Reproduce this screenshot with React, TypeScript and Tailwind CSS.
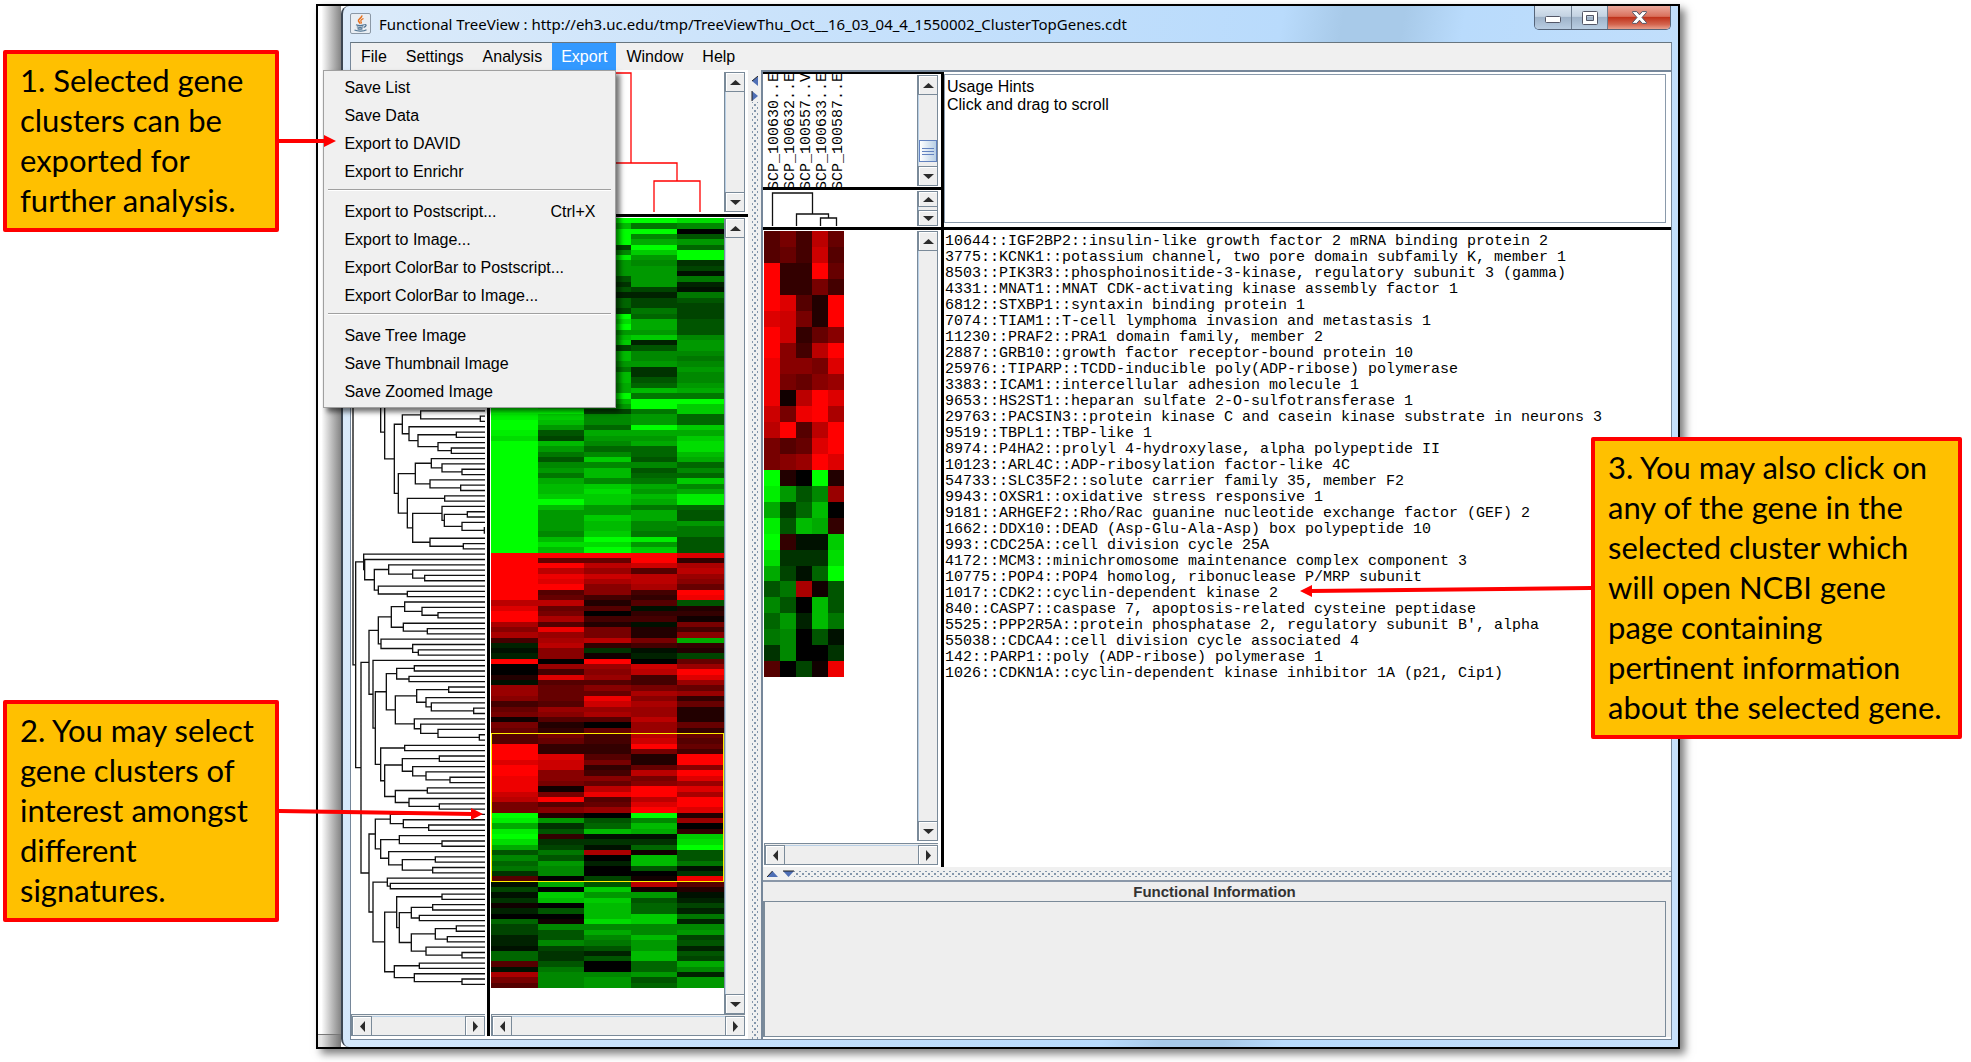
import React from "react";

type TreeNode = number | [number, TreeNode, TreeNode];
type Direction = "up" | "down" | "left" | "right";

const TITLE =
  "Functional TreeView : http://eh3.uc.edu/tmp/TreeViewThu_Oct__16_03_04_4_1550002_ClusterTopGenes.cdt";

const MENUS = ["File", "Settings", "Analysis", "Export", "Window", "Help"];

const EXPORT_GROUPS = [
  [
    { label: "Save List" },
    { label: "Save Data" },
    { label: "Export to DAVID" },
    { label: "Export to Enrichr" },
  ],
  [
    { label: "Export to Postscript...", shortcut: "Ctrl+X" },
    { label: "Export to Image..." },
    { label: "Export ColorBar to Postscript..." },
    { label: "Export ColorBar to Image..." },
  ],
  [
    { label: "Save Tree Image" },
    { label: "Save Thumbnail Image" },
    { label: "Save Zoomed Image" },
  ],
];

const ARRAYS = [
  "SCP_100630..E",
  "SCP_100632..E",
  "SCP_100557..V",
  "SCP_100633..E",
  "SCP_100587..E",
];

const GENES = [
  "10644::IGF2BP2::insulin-like growth factor 2 mRNA binding protein 2",
  "3775::KCNK1::potassium channel, two pore domain subfamily K, member 1",
  "8503::PIK3R3::phosphoinositide-3-kinase, regulatory subunit 3 (gamma)",
  "4331::MNAT1::MNAT CDK-activating kinase assembly factor 1",
  "6812::STXBP1::syntaxin binding protein 1",
  "7074::TIAM1::T-cell lymphoma invasion and metastasis 1",
  "11230::PRAF2::PRA1 domain family, member 2",
  "2887::GRB10::growth factor receptor-bound protein 10",
  "25976::TIPARP::TCDD-inducible poly(ADP-ribose) polymerase",
  "3383::ICAM1::intercellular adhesion molecule 1",
  "9653::HS2ST1::heparan sulfate 2-O-sulfotransferase 1",
  "29763::PACSIN3::protein kinase C and casein kinase substrate in neurons 3",
  "9519::TBPL1::TBP-like 1",
  "8974::P4HA2::prolyl 4-hydroxylase, alpha polypeptide II",
  "10123::ARL4C::ADP-ribosylation factor-like 4C",
  "54733::SLC35F2::solute carrier family 35, member F2",
  "9943::OXSR1::oxidative stress responsive 1",
  "9181::ARHGEF2::Rho/Rac guanine nucleotide exchange factor (GEF) 2",
  "1662::DDX10::DEAD (Asp-Glu-Ala-Asp) box polypeptide 10",
  "993::CDC25A::cell division cycle 25A",
  "4172::MCM3::minichromosome maintenance complex component 3",
  "10775::POP4::POP4 homolog, ribonuclease P/MRP subunit",
  "1017::CDK2::cyclin-dependent kinase 2",
  "840::CASP7::caspase 7, apoptosis-related cysteine peptidase",
  "5525::PPP2R5A::protein phosphatase 2, regulatory subunit B', alpha",
  "55038::CDCA4::cell division cycle associated 4",
  "142::PARP1::poly (ADP-ribose) polymerase 1",
  "1026::CDKN1A::cyclin-dependent kinase inhibitor 1A (p21, Cip1)",
];

// One letter per array: A-P is green level 0-15, a-p is red level 0-15
const ROWS_BEFORE = (
  "PPPPN PPLHI PPPPA PPPIF PPPKJ PPEPG PPIMP PPOJP PPJID PPJJE PPJJB PPFJH PPDJC PPFEB PPCCH " +
  "PPGEF PPGEE PPEHE PPPGE PPNKF PPPKF PPJJF PPLMI PPMCJ PPEFJ PPLII PPLIH PPJJI PPHDJ PPLDI " +
  "PPLFI PPKGJ PPKLK PPPHH PPLPP PNJPM PPEHM OMIJG PLIJG PJGPM OFKKK NEJJM PLIKN PJGGN PHIGL " +
  "PFMFK PIIIG PJLFI PHLGG PKIHM PLMKI PLNJK PMMLO PPMKO PLJHG PJJKF PJMKF PJLIJ PJLIH PIMHH " +
  "PLPOF PNNJF PLPMF " +
  "ppppn pggpd pplmk pljfl pomlj pnkli ppikg pfiep pgedo llcfF ngfBc phadd pkeeb kfcBh iohce " +
  "kjhci eklhK Clded BiDBc CibCE papag ajjmj aeilp cnjen Bffej jgihg jggkj igoid efmkg gjjjc " +
  "hikjc bfflc hcajg gdgjd"
).split(" ");

const SELECTED_ROWS = (
  "fhelg fgemf pddpg pddhe pnfcp nmhcp pmdgi pielp oiihn ohgij oblpn mhopk lpflp hfgnp hijpn " +
  "PcAPc OJFIj KDGLA OFLKd PdBBM NDDDN KEBGP FHkbF IFALF GJCLH HIAFB DIAAD faEbo"
).split(" ");

const ROWS_AFTER = (
  "BKFlf EAMbc BMJJB DLMFC bALGE CFLGC AALMH GbNMC EIIII EFKIJ CFILE CIHJF BEFJC GDCLF GDFLE " +
  "fFAGK BHAGI kIIJC hIJFJ fIJGJ"
).split(" ");

const ALL_ROWS = [...ROWS_BEFORE, ...SELECTED_ROWS, ...ROWS_AFTER];

// [x of the join, upper branch, lower branch]; a number is a bundle of that many leaves
const GENE_TREE: TreeNode = [42,
  [125, 35, [137, 1, [166,
    [190, [245, 1, [424, 1, 1]], [210, 1, [237, [352, 1, 1], [297, 1, [337, 1, 1]]]]],
    [178,
      [229, [277, 1, [309, 1, [369, 1, 1]]], [273, 1, [365, 1, 1]]],
      [205, [317, 1, 1], [221,
        [309, 1, [316, [385, 1, 1], [369, 1, [436, 1, 1]]]],
        [273, 1, [373, 1, 1]]]]]]]],
  [50,
    [74, 1, [77, 1, [106, [149, 1, [221, 1, [257, 1, 1]]], [118, 1, [205, 1, 1]]]]],
    [66,
      [90,
        [118,
          [157, [197, 1, [249, 1, [297, 1, 1]]], [193, 1, [265, 1, 1]]],
          [126, 1, [221, 1, [238, 1, 1]]]],
        [102, 1, [109,
          [142,
            [173, [226, 1, 1], [210, 1, 1]],
            [169,
              [233, [329, 1, 1], [261, 1, [277, 1, [404, 1, 1]]]],
              [226, 1, [245, 1, [297, 1, [421, 1, 1]]]]]],
          [125, [197, 1, 1], [137,
            [190, [301, 1, 1], [221, 1, [261, 1, [333, 1, 1]]]],
            [169, [265, 1, 1], [210, 1, [301, 1, 1]]]]]]]],
      [90,
        [109,
          [154, 1, [193, 1, [269, 1, 1]]],
          [125, [181, 1, [309, 1, 1]], [149, 1, [190, [289, 1, 1], [281, 1, 1]]]]],
        [102,
          [145, 1, [154, 1, 1]],
          [137,
            [173, [309, 1, 1], [181,
              [217, [281, 1, 1], [241, 1, 1]],
              [217, [289, [352, 1, 1], [325, 1, 1]], [261, 1, [369, 1, 1]]]]],
            [166, [241, 1, 1], [226, 1, [369, 1, 1]]]]]]]]];

const LEAF_PITCH = 16;
const LEAF_END = 438;

const buildTreePath = (root: TreeNode) => {
  let row = 0;
  const segments: string[] = [];

  const walk = (node: TreeNode): { x: number; y: number } => {
    if (typeof node === "number") {
      const y = (row + node / 2) * LEAF_PITCH;
      row += node;
      return { x: LEAF_END, y };
    }
    const [x, upper, lower] = node;
    const a = walk(upper);
    const b = walk(lower);
    segments.push(`M${a.x} ${a.y}H${x}V${b.y}H${b.x}`);
    return { x, y: (a.y + b.y) / 2 };
  };

  walk(root);
  return segments.join("");
};

const GENE_TREE_PATH = buildTreePath(GENE_TREE);

const cellColor = (code: string) => {
  const isGreen = code < "a";
  const level = (code.charCodeAt(0) - (isGreen ? 65 : 97)) * 17;
  return isGreen ? `rgb(0,${level},0)` : `rgb(${level},0,0)`;
};

const HeatMap = ({ rows, className }: { rows: string[]; className: string }) => (
  <svg
    className={className}
    viewBox={`0 0 5 ${rows.length}`}
    preserveAspectRatio="none"
    shapeRendering="crispEdges"
  >
    {rows.map((row, y) =>
      row.split("").map((code, x) => (
        <rect key={`${x}-${y}`} x={x} y={y} width="1" height="1" fill={cellColor(code)} />
      ))
    )}
  </svg>
);

const ARROWS: Record<Direction, string> = {
  up: "M0 8 5.500 3 11 8Z",
  down: "M0 3 5.500 8 11 3Z",
  left: "M8 0 3 5.500 8 11Z",
  right: "M3 0 8 5.500 3 11Z",
};

const ScrollButton = ({ direction, small }: { direction: Direction; small?: boolean }) => (
  <button
    aria-label={`Scroll ${direction}`}
    className={`flex shrink-0 items-center justify-center border border-[#7a8a99] bg-[#eeeeee] shadow-[inset_1px_1px_0_#fff] w-[20px] ${
      small ? "h-[16px]" : "h-[20px]"
    }`}
  >
    <svg className="size-[11px]" viewBox="0 0 11 11">
      <path d={ARROWS[direction]} fill="#2b2b2b" />
    </svg>
  </button>
);

const VerticalScroll = ({ small, thumb }: { small?: boolean; thumb?: boolean }) => (
  <div className="flex w-[21px] shrink-0 flex-col border-l border-[#7a8a99] bg-[#eeeeee]">
    <ScrollButton direction="up" small={small} />
    <div className="flex flex-1 flex-col justify-end border-x border-l-[#b8cfe5] border-r-[#7a8a99]">
      {thumb && (
        <div className="mb-1 flex h-[22px] flex-col items-center justify-center gap-[2px] border border-[#6382bf] bg-linear-to-r from-white to-[#b8cfe5]">
          <div className="h-px w-3 bg-[#6382bf]" />
          <div className="h-px w-3 bg-[#6382bf]" />
          <div className="h-px w-3 bg-[#6382bf]" />
        </div>
      )}
    </div>
    <ScrollButton direction="down" small={small} />
  </div>
);

const HorizontalScroll = () => (
  <div className="flex h-[22px] shrink-0 border-t border-l border-[#7a8a99] bg-[#eeeeee] pt-px">
    <ScrollButton direction="left" />
    <div className="flex-1 border-y border-t-[#b8cfe5] border-b-[#7a8a99]" />
    <ScrollButton direction="right" />
  </div>
);

const JavaIcon = () => (
  <svg className="size-[21px]" viewBox="0 0 21 21" fill="none">
    <rect x="0.5" y="0.5" width="20" height="20" rx="1.500" fill="#e9eef3" stroke="#8b98a6" />
    <path d="M11.500 2.500c1.500 2-4 3.500-3 5.500.4.900 1.500 1.500 1.500 2.700" stroke="#e76f1a" strokeWidth="1.600" />
    <path d="M13.500 5.500c-2 1-3.200 1.700-2.500 3 .5.800.4 1.500-.2 2" stroke="#e76f1a" strokeWidth="1.300" />
    <path d="M6 11.800c2.500 1 6 .9 8 0M6.800 13.800c2 .8 4.600.8 6.400 0M7.500 15.600c1.500.6 3.500.6 5 0" stroke="#4f7391" strokeWidth="1.200" />
    <path d="M14.300 11.600c2.600-.6 2.400 2-.6 2.700M4.500 17c3 1.500 9.500 1.500 12-.2" stroke="#4f7391" strokeWidth="1.200" />
  </svg>
);

const WindowControls = () => (
  <div className="mr-[6px] flex h-6 shrink-0 overflow-hidden rounded-b-[5px] border border-t-0 border-[#56657a]">
    <button
      aria-label="Minimize"
      className="flex w-[37px] items-center justify-center border-r border-[#6d7d90] bg-[linear-gradient(#dbe6f1,#c3d2e2_45%,#9fb3c9_50%,#b9cde2)]"
    >
      <svg className="mt-1 h-[7px] w-4" viewBox="0 0 16 7">
        <rect x="0.5" y="0.5" width="15" height="6" rx="1" fill="#fff" stroke="#535666" />
      </svg>
    </button>
    <button
      aria-label="Maximize"
      className="flex w-9 items-center justify-center border-r border-[#6d7d90] bg-[linear-gradient(#dbe6f1,#c3d2e2_45%,#9fb3c9_50%,#b9cde2)]"
    >
      <svg className="h-[14px] w-4" viewBox="0 0 16 14">
        <path
          d="M.5 1.500a1 1 0 0 1 1-1h13a1 1 0 0 1 1 1v11a1 1 0 0 1-1 1h-13a1 1 0 0 1-1-1ZM4.500 4.500v5h7v-5Z"
          fill="#fff"
          fillRule="evenodd"
          stroke="#535666"
        />
      </svg>
    </button>
    <button
      aria-label="Close"
      className="flex w-[62px] items-center justify-center bg-[linear-gradient(#eba99d,#d9705c_45%,#c0331c_50%,#d4654f_80%,#e8a08d)]"
    >
      <svg className="h-[13px] w-[15px]" viewBox="0 0 15 13">
        <path
          d="M.6.600h4.200l2.700 3.200L10.200.600h4.200v1L10 6.500l4.400 4.900v1h-4.200L7.500 9.200l-2.700 3.200H.6v-1L5 6.500.6 1.600Z"
          fill="#fff"
          stroke="#535666"
        />
      </svg>
    </button>
  </div>
);

const ExportMenu = () => (
  <div
    role="menu"
    className="absolute top-full right-0 z-20 w-[293px] border border-[#a0a0a0] bg-[#f0f0f0] pt-[3px] pb-px shadow-[4px_4px_5px_rgba(0,0,0,0.55)]"
  >
    {EXPORT_GROUPS.map((group, index) => (
      <React.Fragment key={group[0].label}>
        {index > 0 && (
          <div className="h-3 px-1 pt-[3px]">
            <hr className="h-[2px] border-t border-b border-t-[#a0a0a0] border-b-white" />
          </div>
        )}
        {group.map((item) => (
          <button
            key={item.label}
            role="menuitem"
            className="flex h-7 w-full items-center justify-between pr-5 pl-5 text-left text-black"
          >
            <span>{item.label}</span>
            {"shortcut" in item && <span>{item.shortcut}</span>}
          </button>
        ))}
      </React.Fragment>
    ))}
  </div>
);

const MenuBar = () => (
  <nav className="flex h-[27px] shrink-0 items-stretch gap-px bg-[#f0f0f0] pl-px text-[16px] leading-5">
    {MENUS.map((menu) => (
      <div key={menu} className="relative flex">
        <button
          className={`px-[9px] ${menu === "Export" ? "bg-[#3399ff] text-white" : "text-black"}`}
        >
          {menu}
        </button>
        {menu === "Export" && <ExportMenu />}
      </div>
    ))}
  </nav>
);

const GeneTreePane = () => (
  <div className="flex w-[136px] shrink-0 flex-col bg-white pr-[2px]">
    <svg
      className="h-[770px] w-[134px]"
      viewBox="36 0 402 2320"
      preserveAspectRatio="none"
      fill="none"
      stroke="#111"
      strokeWidth="4"
    >
      <path d={GENE_TREE_PATH} />
    </svg>
    <div className="flex-1" />
    <HorizontalScroll />
  </div>
);

const GlobalView = () => (
  <section className="flex w-[397px] shrink-0 flex-col bg-white pb-[3px]">
    <div className="flex h-[144px] shrink-0 pt-[2px] pb-[2px]">
      <div className="w-[136px]" />
      <div className="w-[3px] bg-black" />
      <svg
        className="h-[140px] flex-1"
        viewBox="0 0 234 140"
        preserveAspectRatio="none"
        fill="none"
        stroke="#f00"
        strokeWidth="1.300"
      >
        <path d="M24 140V1H141V91M117 140V91H187V109M164 140V109H210V140" />
      </svg>
      <VerticalScroll />
      <div className="w-[3px]" />
    </div>
    <div className="h-[3px] shrink-0 bg-black" />
    <div className="flex flex-1">
      <GeneTreePane />
      <div className="w-[3px] bg-black" />
      <div className="flex flex-1 flex-col pt-px pr-[3px] pl-px">
        <div className="flex flex-1">
          <div className="relative flex-1 pb-[26px]">
            <HeatMap rows={ALL_ROWS} className="h-[770px] w-full" />
            <div className="absolute inset-x-0 top-[515px] h-[149px] border border-[#ffee00]" />
          </div>
          <VerticalScroll />
        </div>
        <HorizontalScroll />
      </div>
    </div>
  </section>
);

const DOTS =
  "bg-[radial-gradient(circle,#8496ab_1px,transparent_1px),radial-gradient(circle,#8496ab_1px,transparent_1px)]";

const VerticalSplit = () => (
  <div className="flex w-[13px] shrink-0 flex-col items-center bg-[#f0f0f0] pt-[6px]">
    <svg className="h-[26px] w-2" viewBox="0 0 8 26">
      <path d="M7 0v10L1 5Z" fill="#4f6fb5" />
      <path d="M7 0 1 5" stroke="#222" />
      <path d="M1 15v10l6-5Z" fill="#4f6fb5" />
      <path d="M1 15v10" stroke="#222" />
    </svg>
    <div className={`w-[6px] flex-1 bg-size-[6px_6px] bg-position-[0_0,3px_3px] ${DOTS}`} />
  </div>
);

const HorizontalSplit = () => (
  <div className="flex h-[13px] shrink-0 items-center bg-[#f0f0f0] pl-1">
    <svg className="h-2 w-[27px]" viewBox="0 0 27 8">
      <path d="M0 7h11L5.500 1Z" fill="#4f6fb5" />
      <path d="M0 7 5.500 1" stroke="#222" />
      <path d="M16 1h11l-5.500 6Z" fill="#4f6fb5" />
      <path d="M16 1h11" stroke="#222" />
    </svg>
    <div className={`h-[6px] flex-1 bg-size-[6px_6px] bg-position-[0_0,3px_3px] ${DOTS}`} />
  </div>
);

const ArrayPane = () => (
  <div className="flex w-[178px] shrink-0 flex-col bg-white">
    <div className="h-[2px] shrink-0 bg-black" />
    <div className="flex h-[113px] shrink-0 overflow-hidden pr-[3px]">
      <div className="flex h-[116px] flex-1 items-end pl-1 font-['Liberation_Mono',monospace] text-[15px]">
        {ARRAYS.map((name) => (
          <span
            key={name}
            className="w-4 rotate-180 leading-4 whitespace-nowrap text-black [writing-mode:vertical-rl]"
          >
            {name}
          </span>
        ))}
      </div>
      <div className="flex py-px">
        <VerticalScroll thumb />
      </div>
    </div>
    <div className="h-[3px] shrink-0 bg-black" />
    <div className="flex h-[37px] shrink-0 justify-between py-px pr-[3px]">
      <svg className="h-[35px] w-[81px]" viewBox="0 0 81 35" fill="none" stroke="#111" strokeWidth="1.300">
        <path d="M9.500 35V2H49.500V23M33.500 35V23H65.500V27M57.500 35V27H73.500V35" />
      </svg>
      <VerticalScroll small />
    </div>
  </div>
);

const UsageHints = () => (
  <div className="flex-1 bg-white pt-[2px] pr-[5px] pb-1">
    <div className="h-full border border-[#8a9aab] px-[2px] py-[3px] text-[16px] leading-[18px] text-black">
      <p>Usage Hints</p>
      <p>Click and drag to scroll</p>
    </div>
  </div>
);

const ZoomView = () => (
  <section className="flex flex-1 flex-col bg-white">
    <div className="flex h-[155px] shrink-0">
      <ArrayPane />
      <div className="w-[3px] bg-black" />
      <UsageHints />
    </div>
    <div className="h-[3px] shrink-0 bg-black" />
    <div className="flex flex-1">
      <div className="flex w-[178px] shrink-0 flex-col pt-px pr-[3px] pb-[2px] pl-px">
        <div className="flex flex-1 justify-between pb-[2px]">
          <HeatMap rows={SELECTED_ROWS} className="h-[446px] w-20" />
          <VerticalScroll />
        </div>
        <HorizontalScroll />
      </div>
      <div className="w-[3px] bg-black" />
      <ul className="flex-1 pt-1 pl-px font-['Liberation_Mono',monospace] text-[15px] leading-4">
        {GENES.map((gene) => (
          <li key={gene}>
            <a href="#" className="whitespace-nowrap text-black">
              {gene}
            </a>
          </li>
        ))}
      </ul>
    </div>
  </section>
);

const FunctionalInformation = () => (
  <section className="flex h-[157px] shrink-0 flex-col border-t-2 border-[#8a97a8] bg-[#eeeeee] pr-[5px]">
    <h2 className="h-[19px] text-center text-[15px] leading-[19px] font-bold text-[#333]">
      Functional Information
    </h2>
    <div className="flex-1 border border-l-2 border-[#7a8a99]" />
  </section>
);

const Callout = ({ lines, className, children }: {
  lines: string[];
  className: string;
  children: React.ReactNode;
}) => (
  <div
    className={`z-30 rounded-[2px] border-4 border-[#ff0000] bg-[#ffc000] pt-[6px] pb-2 pl-[13px] font-['Lato',sans-serif] text-[31px] leading-10 whitespace-nowrap text-black ${className}`}
  >
    {lines.map((line) => (
      <p key={line}>{line}</p>
    ))}
    {children}
  </div>
);

const App = () => (
  <div className="flex min-h-[1062px] w-full bg-white font-['Liberation_Sans',Arial,sans-serif]">
    <aside className="flex w-[316px] shrink-0 flex-col gap-[468px] pt-[50px] pl-[3px]">
      <Callout
        className="relative w-[276px]"
        lines={["1. Selected gene", "clusters can be", "exported for", "further analysis."]}
      >
        <svg className="absolute top-[81px] left-full ml-1 h-3 w-[57px]" viewBox="0 0 57 12">
          <path d="M0 6h46" stroke="#f00" strokeWidth="4" />
          <path d="M45 0v12l12-6Z" fill="#f00" />
        </svg>
      </Callout>
      <Callout
        className="relative w-[276px]"
        lines={["2. You may select", "gene clusters of", "interest amongst", "different", "signatures."]}
      >
        <svg className="absolute top-[102px] left-full ml-1 h-[14px] w-[204px]" viewBox="0 0 204 14">
          <path d="M0 5 194 8" stroke="#f00" strokeWidth="4" />
          <path d="M192 2v12l12-6Z" fill="#f00" />
        </svg>
      </Callout>
    </aside>

    <div className="relative mt-1 mr-[291px] mb-[13px] flex flex-1 border-2 border-black bg-white shadow-[5px_5px_8px_rgba(0,0,0,0.5)]">
      <div className="flex w-[23px] shrink-0 flex-col justify-end bg-linear-to-r from-white from-15% to-[#858585]">
        <div className="h-[13px] border-t border-[#777] bg-black/10" />
      </div>

      <main className="flex flex-1 flex-col rounded-l-lg border-l-2 border-[#3c4652] bg-[linear-gradient(100deg,#dcebfa,#c9e2fb_30%,#b9dbfc_62%,#a8cae9_66%,#a8cae9_70%,#b9dbfc_74%,#c8e1fb)] pr-[6px] pb-[7px] pl-[7px]">
        <header className="-mr-[5px] flex h-9 shrink-0 items-start">
          <div className="flex flex-1 items-center gap-2 pt-[7px]">
            <JavaIcon />
            <h1 className="font-['Noto_Sans',sans-serif] text-[15px] leading-5 whitespace-nowrap text-black">
              {TITLE}
            </h1>
          </div>
          <WindowControls />
        </header>

        <div className="flex flex-1 flex-col border border-[#76879a] border-t-[#67757f] bg-white">
          <MenuBar />
          <div className="flex flex-1">
            <GlobalView />
            <VerticalSplit />
            <div className="flex flex-1 flex-col border-t-2 border-l-2 border-[#76879a] bg-white pb-[2px]">
              <ZoomView />
              <HorizontalSplit />
              <FunctionalInformation />
            </div>
          </div>
        </div>
      </main>

      <Callout
        className="absolute top-[431px] -right-[284px] w-[371px]"
        lines={[
          "3. You may also click on",
          "any of the gene in the",
          "selected cluster which",
          "will open NCBI gene",
          "page containing",
          "pertinent information",
          "about the selected gene.",
        ]}
      >
        <svg className="absolute top-[143px] right-full mr-1 h-[14px] w-[291px]" viewBox="0 0 291 14">
          <path d="M291 4 10 7" stroke="#f00" strokeWidth="4" />
          <path d="M12 1v12L0 7Z" fill="#f00" />
        </svg>
      </Callout>
    </div>
  </div>
);

export default App;
